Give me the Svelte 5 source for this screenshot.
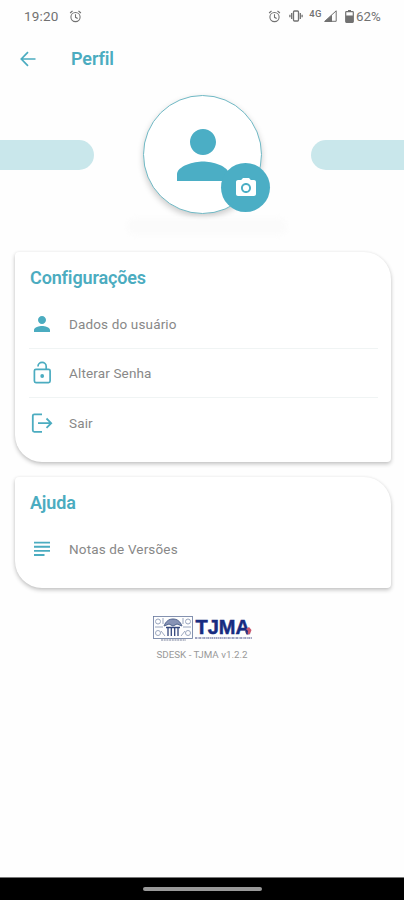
<script>
  const settings = [
    { icon: 'person', label: 'Dados do usuário' },
    { icon: 'lock', label: 'Alterar Senha' },
    { icon: 'exit', label: 'Sair' }
  ];
  const help = [{ icon: 'notes', label: 'Notas de Versões' }];
</script>

{#snippet alarm()}
  <svg class="alarm" width="13" height="13" viewBox="0 0 24 24" fill="none" stroke="currentColor" stroke-width="2">
    <circle cx="12" cy="13" r="8.5" /><path d="M12 8v5.5l4 2.3M2 5.5 6.5 1.8M22 5.5l-4.500-3.700" />
  </svg>
{/snippet}

{#snippet icon(name)}
  <svg class="icon" width="24" height="24" viewBox="0 0 24 24" fill="currentColor">
    {#if name === 'person'}
      <path d="M12 12c2.210 0 4-1.790 4-4s-1.790-4-4-4-4 1.790-4 4 1.790 4 4 4zm0 2c-2.670 0-8 1.340-8 4v2h16v-2c0-2.660-5.330-4-8-4z" />
    {:else if name === 'lock'}
      <g fill="none" stroke="currentColor" stroke-width="1.7">
        <rect x="4.400" y="8.300" width="15.700" height="13.300" rx="1.500" />
        <path d="M8 5.400a4.100 4.100 0 0 1 8.200 0v3" />
      </g>
      <circle cx="12.200" cy="15" r="1.900" />
    {:else if name === 'exit'}
      <path d="M12 3.300H4.300a1.500 1.500 0 0 0-1.500 1.500v14.500a1.500 1.500 0 0 0 1.500 1.500H12M8 12.200h13M16.500 7.500l4.700 4.700-4.700 4.700" fill="none" stroke="currentColor" stroke-width="1.8" />
    {:else}
      <path d="M4 4.700h16v1.900H4zM4 8.800h16v1.900H4zM4 12.900h16v1.900H4zM4 17h10.500v1.900H4z" />
    {/if}
  </svg>
{/snippet}

{#snippet card(title, items, kind)}
  <section class="card {kind}">
    <h2>{title}</h2>
    <ul>
      {#each items as item}
        <li>{@render icon(item.icon)}<span>{item.label}</span></li>
      {/each}
    </ul>
  </section>
{/snippet}

<div class="screen">
  <div class="status">
    <span class="time">19:20</span>
    {@render alarm()}
    <div class="right">
      {@render alarm()}
      <svg class="vibrate" width="14" height="12" viewBox="0 0 14 12" fill="none" stroke="currentColor" stroke-width="1.300">
        <rect x="4.500" y="1" width="5" height="10" rx="1" /><path d="M2.700 3v6M11.300 3v6" /><path d="M.9 4.800v2.400M13.100 4.800v2.400" />
      </svg>
      <span class="net">4G</span>
      <svg class="signal" width="13" height="12" viewBox="0 0 13 12">
        <path d="M.8 11.300 12.200.8v10.500z" fill="none" stroke="currentColor" /><path d="M0 12 8 4.800V12z" fill="currentColor" />
      </svg>
      <svg class="battery" width="9" height="13" viewBox="0 0 9 13">
        <path d="M3 0h3v1.500H3z" fill="currentColor" /><rect x=".7" y="1.700" width="7.600" height="10.600" rx=".7" fill="none" stroke="currentColor" stroke-width="1.200" /><path d="M1 5.500h7V12H1z" fill="currentColor" />
      </svg>
      <span class="pct">62%</span>
    </div>
  </div>

  <header>
    <svg width="16" height="16" viewBox="0 0 16 16" fill="none" stroke="currentColor" stroke-width="1.700"><path d="M15.500 8H1.500M8 1.200 1.300 8 8 14.800" /></svg>
    <h1>Perfil</h1>
  </header>

  <div class="hero">
    <div class="bar left"></div>
    <div class="avatar">
      <svg width="78" height="78" viewBox="0 0 24 24" fill="currentColor"><path d="M12 12c2.210 0 4-1.790 4-4s-1.790-4-4-4-4 1.790-4 4 1.790 4 4 4zm0 2c-2.670 0-8 1.340-8 4v2h16v-2c0-2.660-5.330-4-8-4z" /></svg>
      <div class="camera">
        <svg width="24" height="24" viewBox="0 0 24 24" fill="#fff"><circle cx="12" cy="12" r="3.100" /><path d="M9 2 7.170 4H4c-1.100 0-2 .9-2 2v12c0 1.100.9 2 2 2h16c1.100 0 2-.9 2-2V6c0-1.100-.9-2-2-2h-3.170L15 2H9zm3 15c-2.760 0-5-2.240-5-5s2.240-5 5-5 5 2.240 5 5-2.240 5-5 5z" /></svg>
      </div>
    </div>
    <div class="bar rightbar"></div>
  </div>
  <div class="name"></div>

  {@render card('Configurações', settings, 'settings')}
  {@render card('Ajuda', help, 'help')}

  <footer>
    <div class="logo">
      <svg width="40" height="26" viewBox="0 0 40 26" fill="none" stroke="#65779c">
        <rect x=".5" y="1.500" width="39" height="22" stroke-width=".8" />
        <g stroke-width="1" opacity=".65">
          <circle cx="5" cy="6.500" r="2.500" /><circle cx="5" cy="18" r="2.500" /><circle cx="35" cy="6.500" r="2.500" /><circle cx="35" cy="18" r="2.500" />
          <path d="M2 12h8M30 12h8M10 3v6M30 3v6M8 16l4 5M32 16l-4 5" />
        </g>
        <path d="M11 11c2-5 5-7 9-7s7 2 9 7l-5-2-4 2-4-2z" fill="#8793b5" stroke="#52658e" />
        <path d="M13 12.500h14M15 13v8M18.300 12v9M21.700 12v9M25 13v8" stroke="#34477d" stroke-width="1.300" />
        <path d="M8 25h25" stroke="#777f99" stroke-width="1" stroke-dasharray="2 .7" />
      </svg>
      <div class="brand">
        <span class="tjma">TJMA</span>
        <svg class="underline" width="57" height="3" viewBox="0 0 57 3"><path d="M0 1h57" stroke="#7d82aa" stroke-width="1.300" stroke-dasharray="2 .6 1 .5" /></svg>
        <svg class="mark" width="7" height="8" viewBox="0 0 7 8"><path d="M1 2 4 0l2.500 3L5 7 2 7.500 3 4z" fill="#c8586e" /><path d="m0 4 3 2-1 2z" fill="#263b8c" /></svg>
      </div>
    </div>
    <p>SDESK - TJMA v1.2.2</p>
  </footer>

  <div class="nav"><div class="pill"></div></div>
</div>

<style>
  :global(body) { background: #fefefe; }
  .screen { width: 404px; height: 900px; display: flex; flex-direction: column; overflow: hidden; background: #fefefe; font-family: Roboto, "Liberation Sans", sans-serif; color: #888; }
  svg { display: block; flex: none; }
  h1, h2, p, ul { margin: 0; padding: 0; }
  .status { height: 32px; display: flex; align-items: center; padding: 0 21px 0 24px; color: #717171; box-sizing: border-box; font-size: 13.5px; }
  .time { width: 45px; letter-spacing: .2px; }
  .right { margin-left: auto; display: flex; align-items: center; }
  .vibrate { margin-left: 8px; }
  .net { font-size: 9.500px; font-weight: 500; margin: -6px 2px 0 6px; letter-spacing: .5px; }
  .battery { margin-left: 8px; }
  .pct { margin-left: 2px; width: 27px; white-space: nowrap; font-size: 13.300px; }
  header { height: 53px; display: flex; align-items: center; padding-left: 20px; color: #4bacc0; box-sizing: border-box; }
  h1 { font-size: 18px; font-weight: 600; margin-left: 35px; letter-spacing: -.1px; }
  .hero { height: 139px; display: flex; align-items: center; justify-content: space-between; box-sizing: border-box; }
  .bar { width: 94px; height: 30px; background: #c9e7eb; border-radius: 0 15px 15px 0; }
  .rightbar { width: 93px; border-radius: 15px 0 0 15px; }
  .avatar { position: relative; width: 119px; height: 119px; box-sizing: border-box; border: 1px solid #70b9c5; border-radius: 50%; background: #fff; box-shadow: 0 3px 6px #0003; color: #4baec5; display: flex; align-items: center; justify-content: center; }
  .camera { position: absolute; left: 77px; top: 67px; width: 49px; height: 49px; border-radius: 50%; background: #4baec5; display: flex; align-items: center; justify-content: center; }
  .name { width: 160px; height: 17px; margin: -6px auto 0; border-radius: 8px; background: #fbfbfb; filter: blur(2px); transform: translateX(5px); }
  .card { margin: 0 13px 0 15px; border-radius: 4px 27px 4px 27px; background: #fff; box-shadow: 0 2px 4px #0000003d, 0 0 3px #0000000a; box-sizing: border-box; padding: 14px 13px 0 14px; }
  .settings { height: 210px; margin-top: 17px; }
  .help { height: 111px; margin-top: 15px; }
  h2 { font-size: 18px; line-height: 24px; font-weight: 600; color: #4bacc0; padding-left: 1px; letter-spacing: -.14px; }
  ul { list-style: none; padding-top: 9px; }
  .settings ul { padding-top: 9.700px; }
  li { height: 49.3px; box-sizing: border-box; border-bottom: 1px solid #f0f4f4; display: flex; align-items: center; padding-left: 1px; }
  li:last-child { border: 0; }
  .icon { color: #4bacc0; }
  li span { margin-left: 15px; font-size: 13.5px; letter-spacing: .15px; }
  footer { margin-top: 27px; display: flex; flex-direction: column; align-items: center; }
  .logo { display: flex; width: 99px; height: 28px; }
  .brand { position: relative; margin-left: 2px; width: 57px; }
  .tjma { display: block; padding-left: 1px; font: bold 20px/25px "Liberation Sans", sans-serif; color: #172b80; -webkit-text-stroke: .5px #172b80; }
  .underline { margin-top: -3px; }
  .mark { position: absolute; right: 0; top: 12px; }
  p { margin-top: 6px; font-size: 9.800px; line-height: 12px; color: #999; }
  .nav { height: 23px; margin-top: auto; background: #000; border-top: 1px solid #777; box-sizing: border-box; display: flex; justify-content: center; align-items: center; }
  .pill { width: 119px; height: 4px; margin-top: -1px; border-radius: 2px; background: #999; }
</style>
